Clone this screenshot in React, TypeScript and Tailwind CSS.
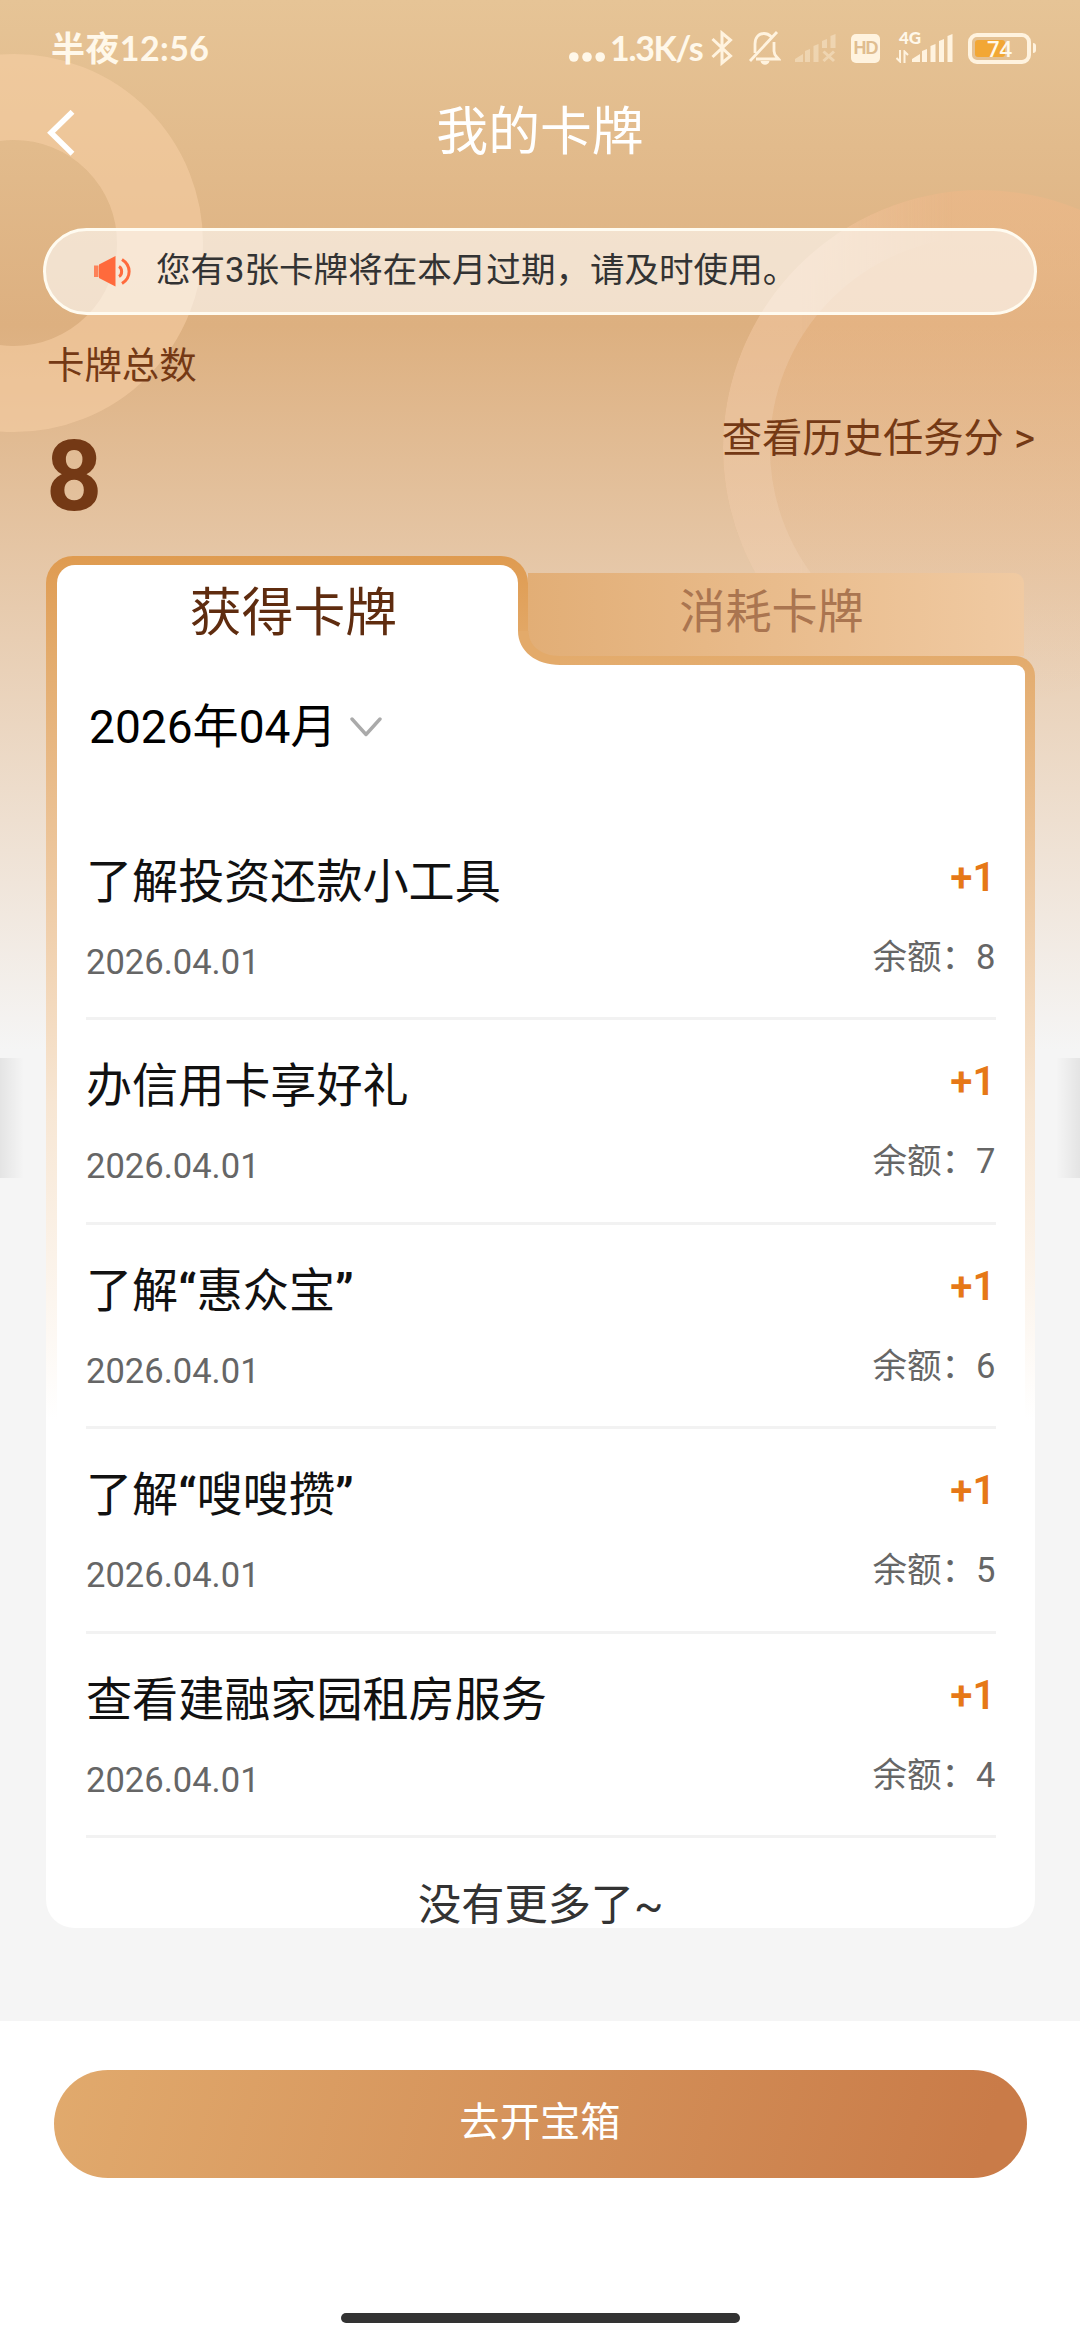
import clsx from 'clsx';
import React from 'react';

interface CardRecord {
  title: string;
  date: string;
  change: string;
  balance: number;
}

const records: CardRecord[] = [
  { title: '了解投资还款小工具', date: '2026.04.01', change: '+1', balance: 8 },
  { title: '办信用卡享好礼', date: '2026.04.01', change: '+1', balance: 7 },
  { title: '了解“惠众宝”', date: '2026.04.01', change: '+1', balance: 6 },
  { title: '了解“嗖嗖攒”', date: '2026.04.01', change: '+1', balance: 5 },
  { title: '查看建融家园租房服务', date: '2026.04.01', change: '+1', balance: 4 },
];

const SignalBars: React.FC = () => (
  <svg width="41" height="30" viewBox="0 0 41 30" fill="#fff3df">
    <path d="M0 29v-3l8-5v8zM10 29V18l5-2v13zM18.500 29V13l5-2v18zM27 29V8l5-2v23zM35.500 29V3l5-2v28z" />
  </svg>
);

const StatusBar: React.FC = () => (
  <div className="flex h-[84px] items-center pt-[12px] pr-[44px] pl-[51px] text-[#fff8ea]">
    <span className="font-['Lato','Noto_Sans_CJK_SC',sans-serif] text-[34px] leading-none font-bold tracking-[0.4px]">
      半夜12:56
    </span>
    <div className="ml-auto flex items-center">
      <svg width="37" height="10" viewBox="0 0 37 10" className="mt-[18px]" fill="currentColor">
        <circle cx="4.8" cy="5" r="4.8" />
        <circle cx="18" cy="5" r="4.8" />
        <circle cx="31.2" cy="5" r="4.8" />
      </svg>
      <span className="ml-[4px] w-[97px] font-['Lato',sans-serif] text-[34px] leading-none font-bold tracking-[-1.300px] whitespace-nowrap">1.3K/s</span>
      <svg width="22" height="36" viewBox="0 0 22 36" className="ml-[4px]" fill="none" stroke="#fff3df" strokeWidth="3">
        <path d="M1.500 9l18 17-8.500 7V3l8.500 7-18 17" />
      </svg>
      <svg width="33" height="34" viewBox="0 0 33 34" className="ml-[15px]" fill="none" stroke="#fff3df" strokeWidth="2.800">
        <path d="M7 22V13c0-7 4-10.500 9-10.500 3 0 5 1 7 3M26 11v9c0 4 2 5 4.500 8H8M29 1L2 30" />
        <path d="M12.500 30h9c-1 5-8 5-9 0z" fill="#fff3df" stroke="none" />
      </svg>
      <svg width="41" height="30" viewBox="0 0 41 30" className="ml-[14px]" fill="#fff3df" opacity="0.4">
        <path d="M0 29v-3l8-5v8zM10 29V18l5-2v13zM18.500 29V13l5-2v18zM27 15V8l5-2v9zM35.500 15V3l5-2v14z" />
        <path d="M28.500 18.500l10.500 9.500M39 18.500L28.500 28" stroke="#fff3df" strokeWidth="3" />
      </svg>
      <span className="ml-[15px] flex h-[29px] w-[29px] items-center justify-center rounded-[5px] bg-[#fff3df] font-['Liberation_Sans',sans-serif] text-[18px] leading-none font-bold tracking-[-1px] text-[#e0bd90]">
        HD
      </span>
      {/* network type sits partly above the bars */}
      <div className="ml-[16px] flex h-[32px] w-[16px] flex-col">
        <span className="ml-[3px] font-['Lato',sans-serif] text-[17px] leading-[12px] font-black">4G</span>
        <svg width="13" height="13" viewBox="0 0 13 13" className="mt-[6px]" fill="none" stroke="#fff3df" strokeWidth="2">
          <path d="M4 0v11.500L0.500 8M8.500 13V1.500L12 5" />
        </svg>
      </div>
      <SignalBars />
      <div className="ml-[15px] flex h-[31px] w-[63px] items-center rounded-[9px] border-4 border-[#fff3df] p-[3px]">
        <div className="relative flex h-full w-full items-center justify-center">
          <div className="absolute inset-y-0 left-0 w-[30px] rounded-[3px] bg-[#f2a735]" />
          <span className="relative font-['Open_Sans',sans-serif] text-[22px] leading-none font-semibold">74</span>
        </div>
      </div>
      <div className="ml-[2px] h-[10px] w-[3px] rounded-r-[3px] bg-[#fff3df]" />
    </div>
  </div>
);

const Header: React.FC = () => (
  <div className="grid h-[97px] grid-cols-[120px_1fr_120px] items-center">
    <svg width="28" height="46" viewBox="0 0 28 46" className="ml-[47px]" fill="none" stroke="#fff" strokeWidth="5.500">
      <path d="M25.500 1.800L4 22.800l21.500 21" />
    </svg>
    <h1 className="text-center text-[51.840px] leading-none text-white">我的卡牌</h1>
  </div>
);

const Notice: React.FC = () => (
  <div className="mx-[43px] mt-[47px] flex h-[87px] items-center rounded-full border-[3px] border-[#fffbf0] bg-white/60 pl-[48px]">
    <svg width="37" height="31" viewBox="0 0 37 31" fill="#ff6a3c">
      <path d="M0 9.500h4.500V21H0z" opacity="0.8" />
      <path d="M5 8.500L21.500 0v30.500L5 22z" />
      <path d="M25 10.500c3.500 2 3.500 8 0 10M28 3.500c9.500 6 9.500 18 0 24" fill="none" stroke="#ff6a3c" strokeWidth="3" />
    </svg>
    <span className="-mt-[3px] ml-[25px] text-[34.560px] leading-none text-[#333]">您有3张卡牌将在本月过期，请及时使用。</span>
  </div>
);

const Summary: React.FC = () => (
  <div className="flex h-[241px] justify-between pr-[45px] pl-[47px] text-[#743915]">
    <div className="flex flex-col pt-[31px]">
      <span className="text-[37.440px] leading-[40px]">卡牌总数</span>
      <span className="mt-[42px] -ml-[1px] text-[98px] leading-[98px] font-bold">8</span>
    </div>
    <button type="button" className="mt-[103px] h-[42px] text-[40.320px] leading-[42px]">
      查看历史任务分 &gt;
    </button>
  </div>
);

const Tabs: React.FC = () => (
  <div className="relative flex h-[100px] items-end">
    <div className="h-full w-[482px] rounded-t-[27px] bg-linear-to-b from-[#df9b50] to-[#e3ab6c] px-[10.500px] pt-[9px]">
      {/* runs over the top edge of the panel below */}
      <div className="flex h-[101px] items-center justify-center rounded-t-[18px] bg-white pb-[4px] pl-[13px] text-[51.840px] leading-none text-[#5f2c0f]">
        获得卡牌
      </div>
    </div>
    <div className="relative h-[83px] w-[496px] rounded-tr-[10px] bg-linear-to-r from-[#e2ae76] to-[#f0caa2]">
      <div className="flex h-full items-center justify-center pr-[9px] pb-[4px] text-[46.080px] leading-none text-[#aa7550]">
        消耗卡牌
      </div>
      {/* inverted corner where the active tab meets the panel */}
      <svg width="42" height="34" viewBox="0 0 42 34" className="absolute -bottom-[9px] -left-[10.500px]">
        <path d="M0 0H10.500C10.500 14 22 25 42 25V34H0z" fill="#e3aa6a" />
        <path d="M-1 0H0C0 20 18 34 42 34H-1z" fill="#fff" />
      </svg>
    </div>
  </div>
);

const MonthPicker: React.FC = () => (
  <button type="button" className="ml-[3px] flex h-[54px] items-center text-[46.080px] leading-none text-black">
    2026年04月
    <svg width="32" height="20" viewBox="0 0 32 20" className="ml-[13px]" fill="none" stroke="#aaa" strokeWidth="3.400" strokeLinecap="round" strokeLinejoin="round">
      <path d="M2 2l14 15.500L30 2" />
    </svg>
  </button>
);

// quotation marks are set heavier than the rest of the title
const RecordTitle: React.FC<{ title: string }> = ({ title }) => (
  <span className="text-[46.080px] leading-[50px] text-[#111]">
    {title.split(/([“”])/).map((part, index) => (
      <span key={index} className={clsx((part === '“' || part === '”') && 'font-bold')}>
        {part}
      </span>
    ))}
  </span>
);

const RecordRow: React.FC<{ record: CardRecord }> = ({ record }) => (
  <li className="flex h-[204.480px] justify-between border-b-[3px] border-[#f2f2f2]">
    <div className="flex flex-col pt-[41px]">
      <RecordTitle title={record.title} />
      <span className="mt-[35px] text-[34.560px] leading-[40px] text-[#666]">{record.date}</span>
    </div>
    <div className="flex flex-col items-end pt-[39px]">
      <span className="text-[40.320px] leading-[46px] font-semibold text-[#e67817]">{record.change}</span>
      <span className="mt-[36px] text-[34.560px] leading-[40px] text-[#666]">余额：{record.balance}</span>
    </div>
  </li>
);

export const MyCardsPage: React.FC = () => {
  return (
    <div className="flex h-[2340px] w-[1080px] flex-col overflow-hidden bg-white font-['Roboto','Noto_Sans_CJK_SC',sans-serif]">
      <div className="relative h-[2021px] overflow-hidden bg-[#f5f5f5]">
        <div className="absolute inset-x-0 top-0 h-[1050px] bg-linear-to-b from-[#e6c496] via-[#ddb080] via-[31%] to-[#f5f5f5]" />
        <div className="absolute top-[54px] -left-[175px] h-[378px] w-[378px] rounded-full border-[86px] border-[#f8d0a6]/55" />
        <div className="absolute top-[190px] left-[723px] h-[516px] w-[516px] rounded-full bg-linear-to-b from-[#f0b888]/50 to-[#f0b888]/0" />
        <div className="absolute top-[190px] left-[723px] h-[516px] w-[516px] rounded-full border-[47px] border-[#f8dcc4]/25 [mask-image:linear-gradient(to_right,black_15%,transparent_45%)]" />
        {['left-0 bg-linear-to-r', 'right-0 bg-linear-to-l'].map((side) => (
          <div key={side} className={clsx('absolute top-[1058px] h-[120px] w-[24px] from-black/7 to-transparent', side)} />
        ))}
        <div className="relative">
          <StatusBar />
          <Header />
          <Notice />
          <Summary />
          <div className="mx-[46px] h-[1372px] w-[989px]">
            <Tabs />
            <div className="h-[1272px] rounded-tr-[20px] rounded-b-[28px] bg-linear-to-b from-[#e3ab6c] via-[#f7e6d3] via-[35%] to-white to-[60%] px-[10.500px] pt-[9px]">
              <div className="h-full rounded-tr-[9px] rounded-b-[24px] bg-white pt-[35px] pr-[29px] pl-[29.500px]">
                <MonthPicker />
                <ul className="mt-[62px]">
                  {records.map((record) => (
                    <RecordRow key={record.title} record={record} />
                  ))}
                </ul>
                <p className="mt-[46px] text-center text-[43.200px] leading-[44px] text-[#333]">没有更多了~</p>
              </div>
            </div>
          </div>
        </div>
      </div>
      <div className="flex flex-1 flex-col items-center pt-[49px]">
        <button
          type="button"
          className="flex h-[108px] w-[973px] items-center justify-center rounded-full bg-linear-[105deg] from-[#e1aa6d] to-[#c97b48] to-95% pb-[1px] text-[40.320px] leading-none text-white"
        >
          去开宝箱
        </button>
        <div className="mt-auto mb-[17px] h-[10px] w-[399px] rounded-full bg-[#333]" />
      </div>
    </div>
  );
};

export default MyCardsPage;
